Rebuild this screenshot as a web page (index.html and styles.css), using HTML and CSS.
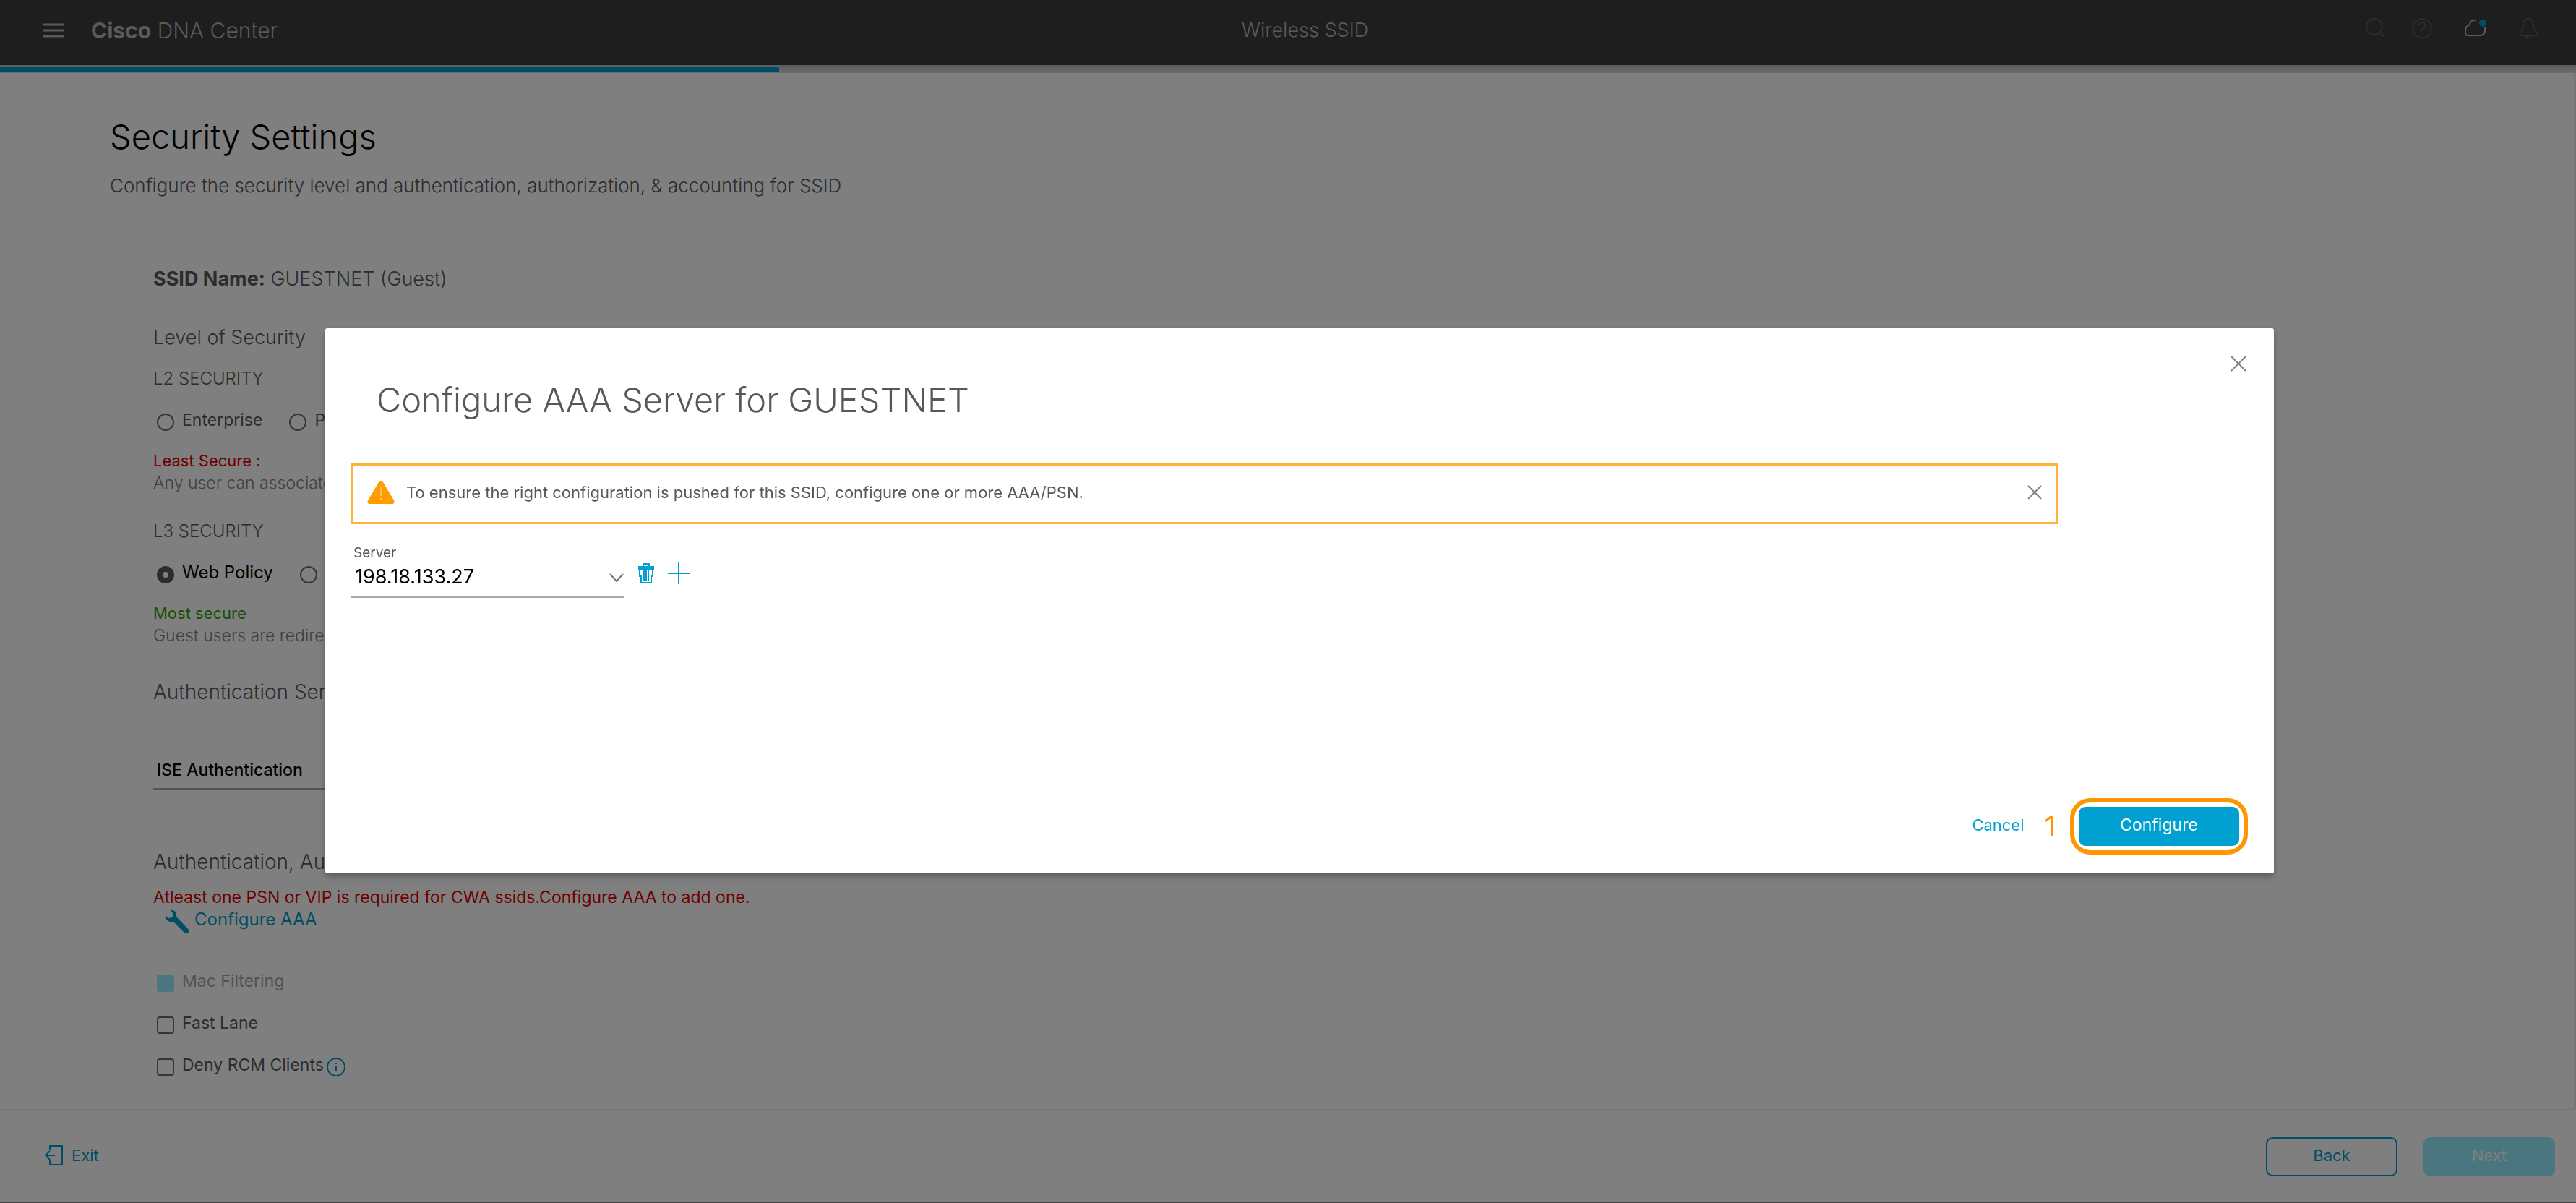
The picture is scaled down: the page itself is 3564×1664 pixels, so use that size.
FILE: index.html
```html
<!DOCTYPE html>
<html lang="en">
<head>
<meta charset="utf-8">
<title>Cisco DNA Center - Wireless SSID</title>
<link rel="stylesheet" href="styles.css">
</head>
<body>
<div class="app">
  <header class="topbar">
    <div class="topbar-left">
      <button class="icon-btn" aria-label="Menu">
        <svg width="28" height="20" viewBox="0 0 28 20"><path d="M0 2h28M0 10h28M0 18h28" stroke="currentColor" stroke-width="3"/></svg>
      </button>
      <a class="brand" href="#"><b>Cisco</b> DNA Center</a>
    </div>
    <div class="topbar-title">Wireless SSID</div>
    <nav class="topbar-tools" aria-label="Tools">
      <button class="icon-btn dim" aria-label="Search">
        <svg width="28" height="28" viewBox="0 0 28 28" fill="none" stroke="currentColor" stroke-width="2"><circle cx="12" cy="12" r="11"/><path d="M20 20l7 7"/></svg>
      </button>
      <button class="icon-btn dim" aria-label="Help">
        <svg width="28" height="28" viewBox="0 0 28 28" fill="none" stroke="currentColor" stroke-width="2"><circle cx="14" cy="14" r="13"/><path d="M9.500 11c0-6 9-6 9-1 0 3-5 3.500-5 7.500M13.500 20v2"/></svg>
      </button>
      <button class="icon-btn cloud" aria-label="Cloud status">
        <svg width="32" height="28" viewBox="0 0 32 28" fill="none"><path d="M17 3H13C10 4 8 6 8 9C4 11 2 13 2 16V20Q2 24 5 24H24Q29 22 29 18V12" stroke="currentColor" stroke-width="2"/><circle cx="26" cy="7" r="5" fill="#009cc8"/></svg>
      </button>
      <button class="icon-btn dim" aria-label="Notifications">
        <svg width="26" height="30" viewBox="0 0 26 30" fill="none" stroke="currentColor" stroke-width="2"><path d="M13 2C8 2 6 5 6 9V14C6 17 1 19 1 22Q1 25 4 25H22Q25 25 25 22C25 19 20 17 20 14V9C20 5 18 2 13 2ZM9 26q4 5 8 0"/></svg>
      </button>
    </nav>
  </header>
  <div class="progress"><div class="progress-fill"></div></div>

  <main class="page">
    <h1>Security Settings</h1>
    <p class="subtitle">Configure the security level and authentication, authorization, &amp; accounting for SSID</p>
    <form class="settings">
      <p class="section ssid"><b>SSID Name:</b> GUESTNET (Guest)</p>
      <h2 class="section level">Level of Security</h2>

      <h3 class="group">L2 SECURITY</h3>
      <div class="choices">
        <label class="choice"><input type="radio" name="l2">Enterprise</label>
        <label class="choice"><input type="radio" name="l2">Personal</label>
      </div>
      <p class="rating bad">Least Secure :</p>
      <p class="hint">Any user can associate to the network.</p>

      <h3 class="group next">L3 SECURITY</h3>
      <div class="choices">
        <label class="choice strong"><input type="radio" name="l3" checked>Web Policy</label>
        <label class="choice"><input type="radio" name="l3">Open</label>
      </div>
      <p class="rating good">Most secure</p>
      <p class="hint">Guest users are redirected to a web portal</p>

      <h2 class="section auth">Authentication Server</h2>
      <select class="select auth-select" aria-label="Authentication Server"><option>ISE Authentication</option></select>

      <h2 class="section aaa">Authentication, Authorization, and Accounting Server</h2>
      <p class="error">Atleast one PSN or VIP is required for CWA ssids.Configure AAA to add one.</p>
      <a class="aaa-link" href="#">
        <svg width="34" height="34" viewBox="0 0 34 34"><path d="M8 1C13 0 17 4 16 10L33 28Q34 31 32 33Q29 34 27 32L12 17C6 19 0 14 1 8L5 12Q9 12 11 10Q12 7 11 5Z" fill="currentColor"/></svg>
        Configure AAA</a>

      <div class="checks">
        <label class="choice off"><input type="checkbox" checked disabled>Mac Filtering</label>
        <label class="choice"><input type="checkbox">Fast Lane</label>
        <div class="check-row">
          <label class="choice"><input type="checkbox">Deny RCM Clients</label>
          <svg class="info" width="26" height="26" viewBox="0 0 26 26" fill="none" stroke="currentColor" stroke-width="2"><circle cx="13" cy="13" r="12"/><path d="M13 11v8M13 7v2"/></svg>
        </div>
      </div>
    </form>
  </main>

  <footer class="footer">
    <a class="exit" href="#">
      <svg width="26" height="30" viewBox="0 0 26 30" fill="none" stroke="currentColor" stroke-width="2"><path d="M8 8V2H25V28H8V21M15 15H2M8 9L2 15L8 21"/></svg>
      Exit</a>
    <div class="footer-actions">
      <button class="btn outline">Back</button>
      <button class="btn faded" disabled>Next</button>
    </div>
  </footer>
</div>

<div class="backdrop">
  <section class="modal" role="dialog" aria-modal="true" aria-labelledby="modal-title">
    <button class="icon-btn modal-close" aria-label="Close">
      <svg width="24" height="24" viewBox="0 0 24 24"><path d="M2 2l20 20M22 2L2 22" stroke="currentColor" stroke-width="2"/></svg>
    </button>
    <h2 class="modal-title" id="modal-title">Configure AAA Server for GUESTNET</h2>
    <div class="alert" role="alert">
      <svg width="38" height="32" viewBox="0 0 38 32"><path d="M19 0Q21 0 22 2L37 27Q39 32 34 32H4Q-1 32 1 27L16 2Q17 0 19 0Z" fill="#ff9c00"/><path d="M19 9V21M19 24v3" stroke="#ffc266" stroke-width="2"/></svg>
      <p>To ensure the right configuration is pushed for this SSID, configure one or more AAA/PSN.</p>
      <button class="icon-btn" aria-label="Dismiss">
        <svg width="20" height="20" viewBox="0 0 20 20"><path d="M1 1l18 18M19 1L1 19" stroke="currentColor" stroke-width="2"/></svg>
      </button>
    </div>
    <div class="server-row">
      <div class="field">
        <label for="server">Server</label>
        <div class="select-wrap">
          <select class="select" id="server"><option>198.18.133.27</option></select>
          <svg class="chevron" width="20" height="12" viewBox="0 0 20 12"><path d="M1 1l9 10L19 1" fill="none" stroke="currentColor" stroke-width="2"/></svg>
        </div>
      </div>
      <button class="icon-btn action" aria-label="Delete server">
        <svg width="22" height="30" viewBox="0 0 22 30" fill="none" stroke="currentColor" stroke-width="2"><path d="M7 5V2H15V5M1 6H21V9H1ZM2 10V19H4V28H18V19H20V10M11 10V25M14 10V25"/><path d="M8 10V25" stroke-width="3"/></svg>
      </button>
      <button class="icon-btn action" aria-label="Add server">
        <svg width="30" height="30" viewBox="0 0 30 30"><path d="M0 15H30M15 0V30" stroke="currentColor" stroke-width="2"/></svg>
      </button>
    </div>
    <div class="modal-actions">
      <button class="cancel">Cancel</button>
      <span class="step">1</span>
      <div class="ring"><button class="btn primary">Configure</button></div>
    </div>
  </section>
</div>
</body>
</html>
```
FILE: styles.css
```css
* { box-sizing: border-box; }

body, h1, h2, h3, p { margin: 0; }

body {
  font-family: Inter, "Liberation Sans", sans-serif;
  font-size: 22px;
  line-height: 28px;
  color: #58585b;
  background: #fff;
}

button, select, input { font: inherit; color: inherit; margin: 0; }
button { padding: 0; border: 0; background: none; }
a { color: inherit; text-decoration: none; }
svg { display: block; flex: none; }

.icon-btn { display: flex; align-items: center; justify-content: center; }

.app { display: flex; flex-direction: column; min-height: 100vh; }

/* Top bar */
.topbar {
  display: grid;
  grid-template-columns: 1fr auto 1fr;
  align-items: center;
  height: 90px;
  padding: 0 13px 6px 60px;
  background: #3c3c3c;
  color: #b4b4b4;
}
.topbar-left { display: flex; align-items: center; gap: 38px; }
.brand { font-size: 30px; line-height: 36px; font-weight: 300; }
.brand b { font-weight: 700; }
.topbar-title { font-size: 27px; line-height: 32px; font-weight: 300; }
.topbar-tools {
  display: flex;
  justify-content: flex-end;
  align-items: center;
  padding: 0 40px 6px 0;
}
.topbar-tools .icon-btn { margin-left: 36px; }
.topbar-tools .cloud, .topbar-tools .cloud + .icon-btn { margin-left: 44px; }
.dim { color: #585858; }

.progress {
  height: 11px;
  padding: 2px 0 1px;
  background: linear-gradient(#b8b8b8, #dcdcdc);
}
.progress-fill { width: 30.25%; height: 8px; background: #009ccc; }

/* Page */
.page {
  flex: 1;
  padding: 60px 152px 38px;
  border-right: 3px solid #ececec;
}
h1 { font-size: 47px; line-height: 56px; font-weight: 300; color: #000; }
.subtitle { margin-top: 24px; font-size: 26px; line-height: 32px; font-weight: 300; }
.settings { padding: 97px 60px 0; }
.section { font-size: 27px; line-height: 32px; font-weight: 300; }
.section b { font-weight: 700; }
.level { margin-top: 49px; }
.auth, .aaa { font-size: 28px; }
.auth { margin-top: 48px; }
.aaa { margin-top: 83px; }
.group { margin-top: 27px; font-size: 24px; font-weight: 300; }
.group.next { margin-top: 39px; }
.choices { display: flex; gap: 37px; margin-top: 29px; padding-left: 5px; }
.choice { display: flex; gap: 11px; height: 29px; font-size: 23px; }
.strong { font-size: 24px; color: #000; }
.off { color: #a4a4a4; }
.rating { margin-top: 27px; }
.bad, .error { color: #dc0000; }
.good { color: #30a000; }
.hint { margin-top: 3px; font-size: 23px; font-weight: 300; color: #808080; }

input[type="radio"], input[type="checkbox"] {
  appearance: none;
  flex: none;
  width: 24px;
  height: 24px;
  margin-top: 5px;
  border: 2px solid #6c6c6c;
  border-radius: 50%;
}
input[type="radio"]:checked { border: 8px solid #58585b; }
input[type="checkbox"] { border-radius: 4px; }
input[type="checkbox"]:disabled { border-color: #94ecff; background: #94ecff; }
input[type="checkbox"]:checked::after {
  content: "";
  display: block;
  width: 7px;
  height: 13px;
  margin: 1px 0 0 7px;
  border: solid #c8e4ec;
  border-width: 0 2px 2px 0;
  transform: rotate(42deg);
}

.select {
  display: block;
  width: 378px;
  height: 50px;
  padding: 0 5px 6px;
  border: 0;
  border-bottom: 3px solid #a8a8a8;
  border-radius: 0;
  background: transparent;
  color: #000;
  appearance: none;
}
.auth-select { margin-top: 70px; padding-bottom: 3px; font-size: 23px; font-weight: 500; }
.error { margin-top: 19px; font-size: 23px; }
.aaa-link {
  display: flex;
  gap: 7px;
  padding: 3px 0 0 16px;
  font-size: 24px;
  color: #009ccc;
}
.aaa-link svg { height: 34px; margin-bottom: -6px; }
.checks { display: flex; flex-direction: column; gap: 29px; margin-top: 57px; padding-left: 5px; }
.check-row { display: flex; gap: 4px; }
.info { margin-top: 4px; color: #009ccc; }

/* Footer */
.footer {
  display: flex;
  align-items: center;
  justify-content: space-between;
  height: 130px;
  padding: 0 29px 0 61px;
  border-top: 2px solid #ececec;
  border-bottom: 1px solid #888;
}
.exit { display: flex; align-items: center; gap: 12px; padding-bottom: 3px; color: #009ccc; }
.footer-actions { display: flex; gap: 36px; }
.btn { width: 182px; height: 54px; padding-bottom: 4px; border-radius: 9px; }
.outline { border: 2px solid #009ccc; color: #009ccc; }
.faded { background: #94ecff; color: #fff; }
.primary { width: 222px; background: #00a0d1; color: #fff; font-size: 23px; }

/* Modal */
.backdrop {
  position: fixed;
  inset: 0;
  display: flex;
  align-items: flex-start;
  padding: 454px 418px 0 450px;
  background: rgba(0, 0, 0, .5);
}
.modal {
  position: relative;
  flex: 1;
  display: flex;
  flex-direction: column;
  min-height: 754px;
  padding: 71px 36px 26px;
  border-radius: 3px;
  background: #fff;
  box-shadow: 0 4px 10px rgba(0, 0, 0, .3);
}
.modal-close { position: absolute; top: 37px; right: 37px; color: #808080; }
.modal-title { padding-left: 35px; font-size: 47px; line-height: 56px; font-weight: 300; }
.alert {
  display: flex;
  align-items: center;
  gap: 16px;
  height: 84px;
  margin: 60px 263px 0 0;
  padding: 0 19px 4px;
  border: 3px solid #ffb33c;
}
.alert p { flex: 1; }
.alert .icon-btn { color: #808080; }
.server-row { display: flex; margin-top: 28px; }
.field label { display: block; padding-left: 3px; font-size: 19px; line-height: 24px; }
.select-wrap { position: relative; }
.select-wrap .select { font-size: 27px; }
.chevron { position: absolute; right: 1px; top: 16px; color: #707070; }
.action { height: 30px; margin: 25px 0 0 19px; color: #00a0d1; }
.modal-actions { display: flex; align-items: center; margin-top: auto; }
.cancel { margin-left: auto; color: #00a0d1; padding-bottom: 4px; }
.step { margin: 0 20px 0 28px; font-size: 38px; line-height: 44px; font-weight: 400; color: #ff9500; }
.ring { padding: 6px; border: 6px solid #ff9500; border-radius: 28px; }
.ring .btn { display: block; }
```
